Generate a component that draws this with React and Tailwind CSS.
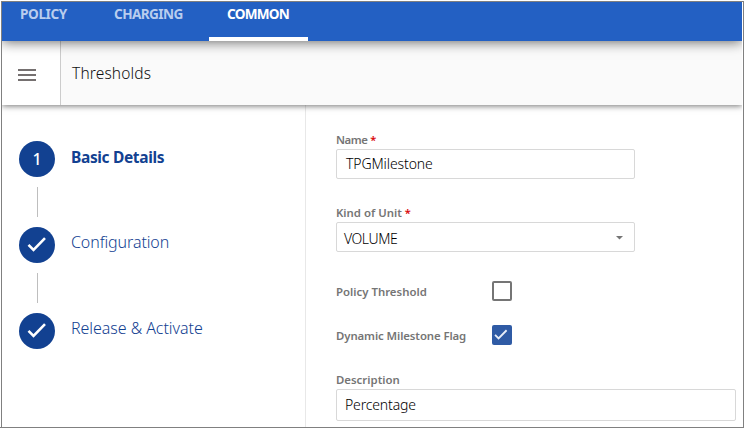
import React from "react";

const TABS = [
  { label: "POLICY", box: "ml-[18px] w-[50px] text-[#b9cdee]", text: "tracking-[-0.4px]" },
  { label: "CHARGING", box: "ml-[44px] w-[71px] text-[#b9cdee]", text: "tracking-[-0.6px]" },
  { label: "COMMON", box: "ml-[24px] w-[99px] text-white border-b-4 border-white pl-[18px]", text: "tracking-[-0.75px]" },
];

function Check({ size, className }) {
  return (
    <svg width={size} height={size} viewBox="0 0 20 20" fill="none" className={className}>
      <path d="M1.5 9.8 L6.5 14.8 L18 3.2" stroke="currentColor" strokeWidth="2.6" />
    </svg>
  );
}

function Step({ mark, label, className }) {
  return (
    <div className="flex h-9 items-start">
      <div className="flex size-9 shrink-0 items-center justify-center rounded-full bg-[#124191] text-[16px] font-medium text-white">
        {mark}
      </div>
      <span className={`ml-4 h-6 whitespace-nowrap leading-6 text-[#124191] ${className}`}>{label}</span>
    </div>
  );
}

function Connector() {
  return <div className="my-[10px] ml-[18px] h-[30px] w-px bg-[#bebebe]" />;
}

function Label({ children, required, className = "" }) {
  return (
    <div className={`flex h-4 whitespace-nowrap text-[11.4px] font-semibold leading-4 text-[#757575] ${className}`}>
      {children}
      {required && <span className="ml-[3px] text-[11px] tracking-normal text-[#d9070a]">*</span>}
    </div>
  );
}

export default function App() {
  return (
    <div className="h-[428px] w-[744px] overflow-hidden border-b border-[#808080] bg-white pl-px pt-px font-['Noto_Sans',sans-serif]">
      <div className="h-[426px] border-l border-r border-t border-[#808080] pr-px">
        <div className="flex h-full flex-col overflow-hidden">
          <header className="relative z-20 flex h-[39px] shrink-0 bg-[#2360c3] text-[13.6px] font-bold shadow-[0_1px_12px_rgba(0,0,0,0.6)]">
            {TABS.map((t) => (
              <div key={t.label} className={`h-[39px] whitespace-nowrap leading-[23px] ${t.box}`}>
                <span className={t.text}>{t.label}</span>
              </div>
            ))}
          </header>

          <div className="relative z-10 flex h-16 shrink-0 bg-[#fafafa] shadow-[0_1px_6px_rgba(0,0,0,0.55)]">
            <div className="flex w-[59px] shrink-0 items-center border-r border-[#cccccc] bg-white pl-4 pt-1">
              <div className="flex flex-col gap-[3px]">
                <i className="h-[2px] w-[18px] bg-[#757070]" />
                <i className="h-[2px] w-[18px] bg-[#757070]" />
                <i className="h-[2px] w-[18px] bg-[#757070]" />
              </div>
            </div>
            <h1 className="ml-[11px] mt-[20px] h-6 text-[15.5px] font-light leading-6 tracking-[0.15px] text-[#111111]">Thresholds</h1>
          </div>

          <main className="flex min-h-0 flex-1">
            <aside className="w-[304px] shrink-0 border-r border-[#e8e8e8] pl-[17px] pt-9">
              <Step mark="1" label="Basic Details" className="mt-[4px] text-[15.5px] font-bold tracking-[-0.35px]" />
              <Connector />
              <Step mark={<Check size={20} />} label="Configuration" className="mt-[3px] text-[16px] font-light tracking-[-0.1px]" />
              <Connector />
              <Step mark={<Check size={20} />} label="Release & Activate" className="mt-[3px] text-[16px] font-light tracking-[-0.05px]" />
            </aside>

            <section className="w-[430px] pl-[30px] pt-[27px]">
              <Label required className="tracking-[-0.5px]">Name</Label>
              <div className="mt-[1px] h-[30px] w-[299px] rounded-[2px] border border-[#d8d8d8] pl-[9px] text-[14px] font-light leading-[27px] tracking-[-0.1px] text-[#000000]">
                <span>TPGMilestone</span>
              </div>

              <Label required className="mt-[26px] tracking-[0px]">Kind of Unit</Label>
              <div className="mt-[1px] flex h-[30px] w-[299px] items-start justify-between rounded-[2px] border border-[#d8d8d8] pl-[7px] pr-[11px] text-[14px] font-light leading-[32px] text-[#000000]">
                <span className="tracking-[-0.45px]">VOLUME</span>
                <svg width="7" height="4" viewBox="0 0 7 4" className="mt-[13px]">
                  <path d="M0 0H7L3.5 3.5Z" fill="#757575" />
                </svg>
              </div>

              <div className="mt-[29px] flex h-5 items-center">
                <Label className="w-[156px] pt-px">Policy Threshold</Label>
                <div className="size-5 rounded-[2px] border-2 border-[#757575]" />
              </div>
              <div className="mt-6 flex h-5 items-center">
                <Label className="w-[156px] pt-px tracking-[-0.1px]">Dynamic Milestone Flag</Label>
                <div className="flex size-5 items-center justify-center rounded-[2px] bg-[#2f5ba5] pr-[2px] text-[#e8eef8]">
                  <Check size={14} />
                </div>
              </div>

              <Label className="mt-[27px]">Description</Label>
              <div className="mt-[1px] h-[32px] w-[400px] rounded-[2px] border border-[#d8d8d8] pl-2 text-[14px] font-light leading-[30px] tracking-[-0.15px] text-[#000000]">
                <span>Percentage</span>
              </div>
            </section>
          </main>
        </div>
      </div>
    </div>
  );
}
